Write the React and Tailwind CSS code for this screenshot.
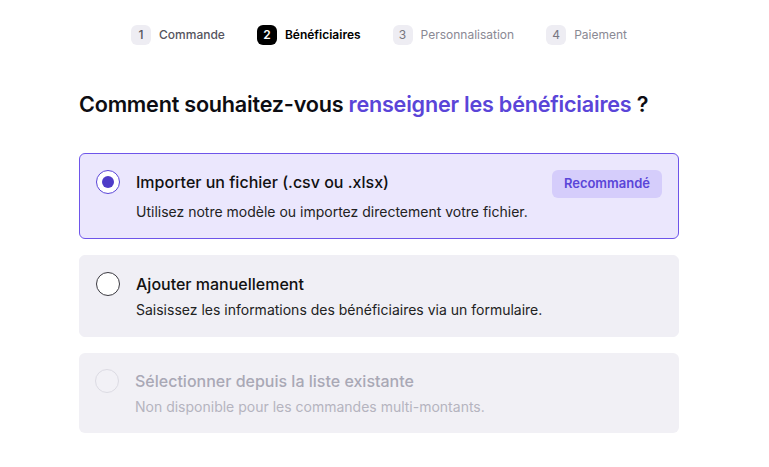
import { useState } from 'react'

const steps = [
  { n: 1, label: 'Commande', state: 'done' },
  { n: 2, label: 'Bénéficiaires', state: 'current' },
  { n: 3, label: 'Personnalisation', state: 'todo' },
  { n: 4, label: 'Paiement', state: 'todo' },
]

const options = [
  {
    id: 'import',
    title: 'Importer un fichier (.csv ou .xlsx)',
    desc: 'Utilisez notre modèle ou importez directement votre fichier.',
    badge: 'Recommandé',
  },
  {
    id: 'manual',
    title: 'Ajouter manuellement',
    desc: 'Saisissez les informations des bénéficiaires via un formulaire.',
  },
  {
    id: 'existing',
    title: 'Sélectionner depuis la liste existante',
    desc: 'Non disponible pour les commandes multi-montants.',
    disabled: true,
  },
]

function Stepper() {
  return (
    <div className="flex items-center justify-center gap-8">
      {steps.map((s) => (
        <div key={s.n} className="flex items-center gap-2">
          <span
            className={
              s.state === 'current'
                ? 'flex h-5 w-5 items-center justify-center rounded-[6px] bg-black text-[12px] font-semibold text-white'
                : s.state === 'done'
                  ? 'flex h-5 w-5 items-center justify-center rounded-[6px] bg-[#eeedf3] text-[12px] font-medium text-[#55545e]'
                  : 'flex h-5 w-5 items-center justify-center rounded-[6px] bg-[#eeedf3] text-[12px] text-[#777680]'
            }
          >
            {s.n}
          </span>
          <span
            className={
              s.state === 'current'
                ? 'text-[12px] font-semibold text-black'
                : s.state === 'done'
                  ? 'text-[12px] font-medium text-[#55545e]'
                  : 'text-[12px] text-[#8a8994]'
            }
          >
            {s.label}
          </span>
        </div>
      ))}
    </div>
  )
}

function Radio({ checked, disabled }) {
  if (checked) {
    return (
      <span className="flex h-6 w-6 shrink-0 items-center justify-center rounded-full border-[1.5px] border-[#5a45d8] bg-white">
        <span className="h-3 w-3 rounded-full bg-[#4e3cc8]" />
      </span>
    )
  }
  return (
    <span
      className={
        disabled
          ? 'h-6 w-6 shrink-0 rounded-full border border-[#dcdbe3] bg-[#f2f1f6]'
          : 'h-6 w-6 shrink-0 rounded-full border border-[#3a3940] bg-white'
      }
    />
  )
}

export default function App() {
  const [selected, setSelected] = useState('import')

  return (
    <div className="min-h-screen bg-white font-['Inter',sans-serif] text-[#111]">
      <div className="ml-[79px] w-[600px] pt-[25px]">
        <Stepper />

        <h1 className="mt-[45px] text-[21.6px] leading-7 font-semibold tracking-[-0.01em] text-[#0d0d12]">
          Comment souhaitez-vous <span className="text-[#5a45d8]">renseigner les bénéficiaires</span> ?
        </h1>

        <div className="mt-[35px] flex flex-col gap-4">
          {options.map((o) => {
            const checked = selected === o.id
            return (
              <button
                key={o.id}
                type="button"
                disabled={o.disabled}
                onClick={() => setSelected(o.id)}
                className={
                  checked
                    ? 'flex gap-4 rounded-[6px] border border-[#6e55ea] bg-[#ebe7fd] p-4 text-left'
                    : o.disabled
                      ? 'flex gap-4 rounded-[6px] bg-[#f1f0f5] p-4 text-left'
                      : 'flex gap-4 rounded-[6px] border border-[#f0eff5] bg-[#f0eff5] p-4 text-left'
                }
              >
                <Radio checked={checked} disabled={o.disabled} />
                <div className="flex flex-1 flex-col gap-1">
                  <div className="flex items-start justify-between">
                    <span
                      className={
                        o.disabled
                          ? 'text-[16px] leading-6 font-medium text-[#a9a8b5]'
                          : 'text-[16px] leading-6 font-medium text-[#111]'
                      }
                    >
                      {o.title}
                    </span>
                    {o.badge && (
                      <span className="flex h-7 items-center rounded-[6px] bg-[#d5cdfb] px-3 text-[13px] font-semibold text-[#5a45d8]">
                        {o.badge}
                      </span>
                    )}
                  </div>
                  <span
                    className={
                      o.disabled
                        ? 'text-[14px] leading-5 text-[#b5b4bf]'
                        : 'text-[14px] leading-5 text-[#222]'
                    }
                  >
                    {o.desc}
                  </span>
                </div>
              </button>
            )
          })}
        </div>
      </div>
    </div>
  )
}
